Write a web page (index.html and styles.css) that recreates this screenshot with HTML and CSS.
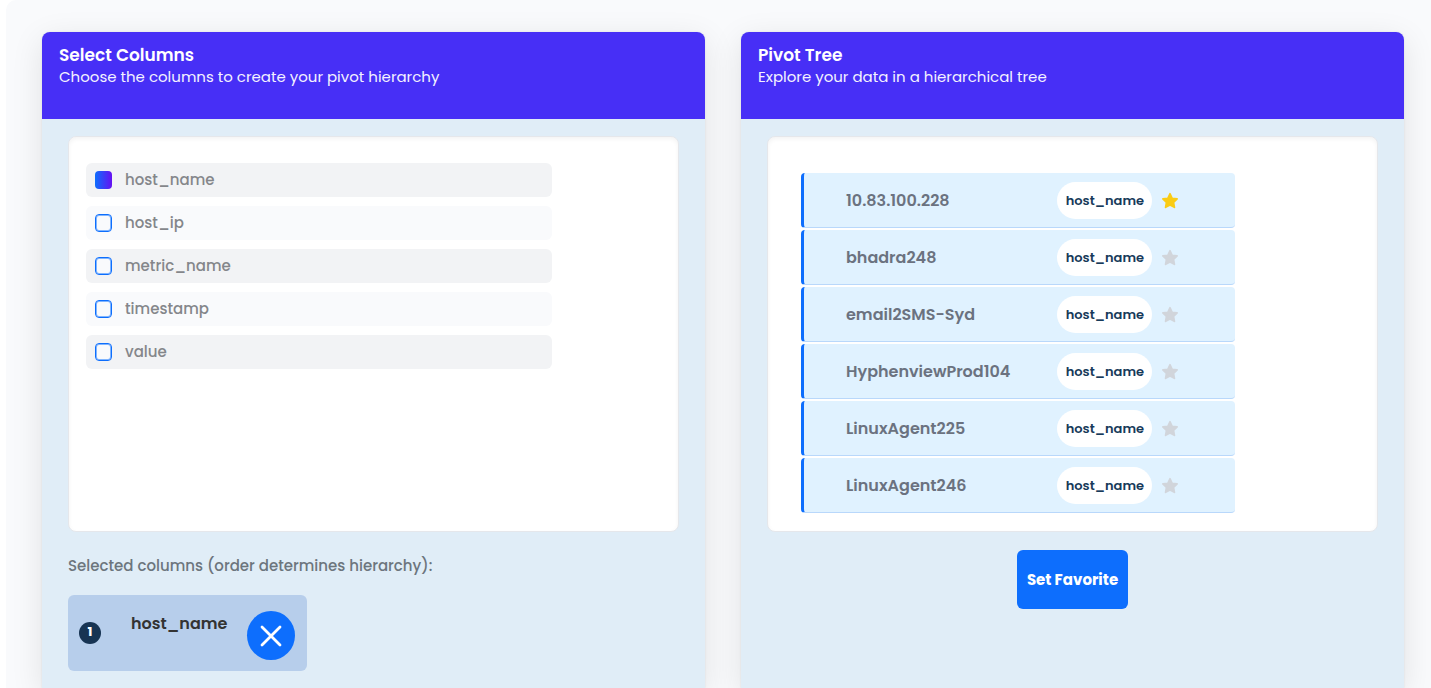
FILE: index.html
```html
<!DOCTYPE html>
<html lang="en">
<head>
<meta charset="utf-8">
<meta name="viewport" content="width=device-width, initial-scale=1">
<title>Pivot Tree</title>
<link rel="stylesheet" href="styles.css">
</head>
<body>
<svg class="sprite" aria-hidden="true">
  <symbol id="star" viewBox="0 0 16 16"><path d="M8 1.6l1.9 4 4.4.6-3.2 3.1.8 4.3L8 11.6l-3.9 2 .8-4.3L1.7 6.2l4.4-.6z" fill="currentColor" stroke="currentColor" stroke-width="1.6" stroke-linejoin="round"/></symbol>
</svg>
<main class="page">
  <section class="card">
    <header class="card-header">
      <h2 class="card-title">Select Columns</h2>
      <p class="card-subtitle">Choose the columns to create your pivot hierarchy</p>
    </header>
    <div class="card-body">
      <div class="panel">
        <div class="column-list">
          <label class="column"><input class="check" type="checkbox" checked><span>host_name</span></label>
          <label class="column"><input class="check" type="checkbox"><span>host_ip</span></label>
          <label class="column"><input class="check" type="checkbox"><span>metric_name</span></label>
          <label class="column"><input class="check" type="checkbox"><span>timestamp</span></label>
          <label class="column"><input class="check" type="checkbox"><span>value</span></label>
        </div>
      </div>
      <p class="hint">Selected columns (order determines hierarchy):</p>
      <div class="chip">
        <span class="chip-order">1</span>
        <span class="chip-name">host_name</span>
        <button class="chip-remove" type="button" aria-label="Remove host_name">
          <svg width="24" height="24" viewBox="0 0 24 24" aria-hidden="true"><path d="M3 3l18 18M21 3L3 21" fill="none" stroke="#fff" stroke-width="2.8" stroke-linecap="round"/></svg>
        </button>
      </div>
    </div>
  </section>

  <section class="card">
    <header class="card-header">
      <h2 class="card-title">Pivot Tree</h2>
      <p class="card-subtitle">Explore your data in a hierarchical tree</p>
    </header>
    <div class="card-body">
      <div class="panel panel-tree">
        <ul class="tree">
          <li class="node"><span class="node-name">10.83.100.228</span><span class="pill">host_name</span><button class="star star-on" type="button" aria-label="Favorite 10.83.100.228"><svg width="18" height="18"><use href="#star"/></svg></button></li>
          <li class="node"><span class="node-name">bhadra248</span><span class="pill">host_name</span><button class="star" type="button" aria-label="Favorite bhadra248"><svg width="18" height="18"><use href="#star"/></svg></button></li>
          <li class="node"><span class="node-name">email2SMS-Syd</span><span class="pill">host_name</span><button class="star" type="button" aria-label="Favorite email2SMS-Syd"><svg width="18" height="18"><use href="#star"/></svg></button></li>
          <li class="node"><span class="node-name">HyphenviewProd104</span><span class="pill">host_name</span><button class="star" type="button" aria-label="Favorite HyphenviewProd104"><svg width="18" height="18"><use href="#star"/></svg></button></li>
          <li class="node"><span class="node-name">LinuxAgent225</span><span class="pill">host_name</span><button class="star" type="button" aria-label="Favorite LinuxAgent225"><svg width="18" height="18"><use href="#star"/></svg></button></li>
          <li class="node"><span class="node-name">LinuxAgent246</span><span class="pill">host_name</span><button class="star" type="button" aria-label="Favorite LinuxAgent246"><svg width="18" height="18"><use href="#star"/></svg></button></li>
        </ul>
      </div>
      <button class="primary" type="button">Set Favorite</button>
    </div>
  </section>
</main>
</body>
</html>
```
FILE: styles.css
```css
*, *::before, *::after { box-sizing: border-box; }

body {
  margin: 0;
  background: #fff;
  font-family: Poppins, Inter, "Open Sans", sans-serif;
  font-size: 15px;
  line-height: 24px;
}

h2, p, ul { margin: 0; padding: 0; }
button { font: inherit; border: 0; padding: 0; cursor: pointer; }
.sprite { position: absolute; width: 0; height: 0; }

.page {
  display: grid;
  grid-template-columns: 1fr 1fr;
  gap: 36px;
  min-height: 100vh;
  margin-left: 6px;
  padding: 32px 27px 0 36px;
  overflow: hidden;
  border-top-left-radius: 10px;
  background: #f9fafc;
}

.card {
  border-radius: 8px 8px 0 0;
  background: #e0edf7;
  box-shadow: 0 8px 32px rgba(0, 0, 0, 0.1), 0 0 2px rgba(0, 0, 0, 0.1);
}

.card-header {
  min-height: 87px;
  padding: 12px 17px;
  border-radius: 8px 8px 0 0;
  background: #472ff6;
  color: #fff;
}
.card-title { font-size: 17px; line-height: 22px; font-weight: 600; }
.card-subtitle { line-height: 22px; color: #f4f2ff; }

.card-body {
  display: flex;
  flex-direction: column;
  padding: 17px 26px;
}

.panel {
  min-height: 396px;
  padding: 26px 17px 15px;
  border: 1px solid #e5e7eb;
  border-radius: 8px;
  background: #fff;
  box-shadow: inset 0 2px 4px rgba(0, 0, 0, 0.05);
}
.panel-tree { padding: 36px 33px 16px; }

.column-list { display: grid; gap: 9px; width: 81%; }
.column {
  display: flex;
  align-items: center;
  gap: 13px;
  height: 34px;
  padding: 0 9px;
  border-radius: 6px;
  background: #f9fafc;
  color: #84868a;
  font-weight: 500;
}
.column:nth-child(odd) { background: #f2f3f5; }

.check {
  appearance: none;
  width: 17px;
  height: 18px;
  margin: 0;
  border: 1px solid #0d6efd;
  border-radius: 4px;
  background: #f9fafc;
  box-shadow: inset 0 0 0 1px #80b5ff;
}
.check:checked {
  border: 0;
  background: linear-gradient(90deg, #0d6efd, #6610f2);
  box-shadow: none;
}

.hint { margin-top: 22px; color: #6c757d; font-weight: 500; }

.chip {
  display: flex;
  align-items: center;
  align-self: flex-start;
  width: 239px;
  height: 76px;
  margin-top: 17px;
  padding: 0 12px 0 11px;
  border-radius: 6px;
  background: #b7ceeb;
}
.chip-order {
  width: 22px;
  height: 22px;
  border-radius: 50%;
  background: #173453;
  color: #fff;
  font-size: 13px;
  line-height: 20px;
  font-weight: 700;
  text-align: center;
}
.chip-name {
  margin-left: 30px;
  padding-bottom: 18px;
  font-size: 16px;
  font-weight: 600;
  color: #333;
}
.chip-remove {
  display: grid;
  place-items: center;
  width: 48px;
  height: 49px;
  margin-top: 5px;
  margin-left: auto;
  border-radius: 50%;
  background: #0d6efd;
}

.tree { display: grid; gap: 2px; width: 80%; list-style: none; }
.node {
  display: flex;
  align-items: center;
  height: 55px;
  padding: 0 56px 0 42px;
  border-left: 3px solid #0d6efd;
  border-bottom: 1px solid #b9d8fb;
  border-radius: 4px;
  background: #e0f2ff;
}
.node-name { flex: 1; padding-top: 2px; font-size: 16px; font-weight: 600; color: #6b7280; }
.pill {
  width: 95px;
  border-radius: 19px;
  background: #fff;
  color: #173a5a;
  font-size: 13px;
  line-height: 37px;
  font-weight: 600;
  text-align: center;
}
.star {
  display: flex;
  margin-top: 2px;
  margin-left: 9px;
  background: none;
  color: #d1d5db;
}
.star-on { color: #facc15; }

.primary {
  align-self: center;
  margin-top: 18px;
  padding: 18px 10px 17px;
  border-radius: 6px;
  background: #0d6efd;
  color: #fff;
  font-weight: 700;
}
```
